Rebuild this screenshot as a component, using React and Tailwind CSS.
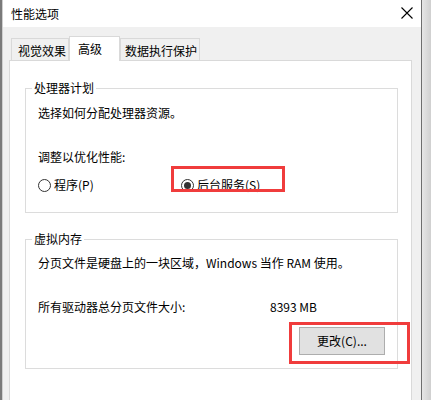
import React from 'react';

const font = { fontFamily: '"Microsoft YaHei", "Noto Sans CJK SC", "Noto Sans", sans-serif' };

function Radio({ checked, label }) {
  return (
    <span className="flex items-center gap-[3px]">
      <span className="flex h-[13px] w-[13px] items-center justify-center rounded-full border border-[#333333] bg-white">
        {checked && <span className="h-[7px] w-[7px] rounded-full bg-[#333333]" />}
      </span>
      <span>{label}</span>
    </span>
  );
}

function GroupBox({ title, className, children }) {
  return (
    <div className={`relative ml-[15px] w-[373px] border border-[#dcdcdc] ${className}`}>
      <span className="absolute -top-[9px] left-[6px] bg-white px-[2px] leading-4">{title}</span>
      {children}
    </div>
  );
}

function Tab({ label, active, className }) {
  if (active) {
    return (
      <div className={`relative z-10 -mb-px h-[25px] border border-b-0 border-[#d9d9d9] bg-white pl-[8px] pt-[4px] leading-4 ${className}`}>
        {label}
      </div>
    );
  }
  return (
    <div className={`h-[22px] border border-b-0 border-[#d9d9d9] bg-[#f0f0f0] pt-[4px] leading-4 ${className}`}>
      {label}
    </div>
  );
}

export default function App() {
  return (
    <div className="flex h-[400px] w-[431px] overflow-hidden bg-[#d6d6d6] text-[12px] text-black" style={font}>
      <div className="w-[2px] bg-[#7a7a7a]" />
      <div className="flex w-[419px] flex-col border-l border-[#cfcfcf] bg-[#f0f0f0]">
        <div className="flex h-[27px] items-center justify-between bg-white pl-[8px] pr-[8px]">
          <span className="leading-4">性能选项</span>
          <svg width="12" height="12" viewBox="0 0 12 12" className="mb-[2px]">
            <path d="M0.5 0.5 L11.5 11.5 M11.5 0.5 L0.5 11.5" stroke="#000" strokeWidth="1.1" />
          </svg>
        </div>

        <div className="ml-[6px] mt-[9px] flex items-end pl-[2px]">
          <Tab label="视觉效果" className="w-[58px] pl-[6px]" />
          <Tab label="高级" active className="w-[51px]" />
          <Tab label="数据执行保护" className="w-[80px] pl-[4px]" />
        </div>

        <div className="ml-[6px] flex-1 w-[403px] border border-b-0 border-[#d9d9d9] bg-white">
          <GroupBox title="处理器计划" className="mt-[27px] h-[125px]">
            <div className="px-[12px] pt-[16px]">
              <p className="leading-4">选择如何分配处理器资源。</p>
              <p className="mt-[28px] leading-4">调整以优化性能:</p>
              <div className="mt-[12px] flex leading-4">
                <span className="w-[143px]">
                  <Radio label="程序(P)" />
                </span>
                <Radio checked label="后台服务(S)" />
              </div>
            </div>
            <div className="absolute left-[145px] top-[77px] h-[26px] w-[114px] border-[3px] border-[#f03c3c]" />
          </GroupBox>

          <GroupBox title="虚拟内存" className="mt-[26px] h-[130px]">
            <div className="px-[12px] pt-[15px]">
              <p className="leading-4">分页文件是硬盘上的一块区域，Windows 当作 RAM 使用。</p>
              <div className="mt-[28px] flex leading-4">
                <span className="w-[232px]">所有驱动器总分页文件大小:</span>
                <span>8393 MB</span>
              </div>
              <div className="mt-[12px] flex justify-end">
                <button className="h-[28px] w-[86px] border border-[#adadad] bg-[#e1e1e1] leading-4">更改(C)...</button>
              </div>
            </div>
            <div className="absolute left-[263px] top-[82px] h-[42px] w-[121px] border-[3px] border-[#f03c3c]" />
          </GroupBox>
        </div>
      </div>
      <div className="w-px bg-[#6e6e6e]" />
      <div className="flex-1 bg-gradient-to-r from-[#e6e6e6] to-[#d0d0d0]" />
    </div>
  );
}
